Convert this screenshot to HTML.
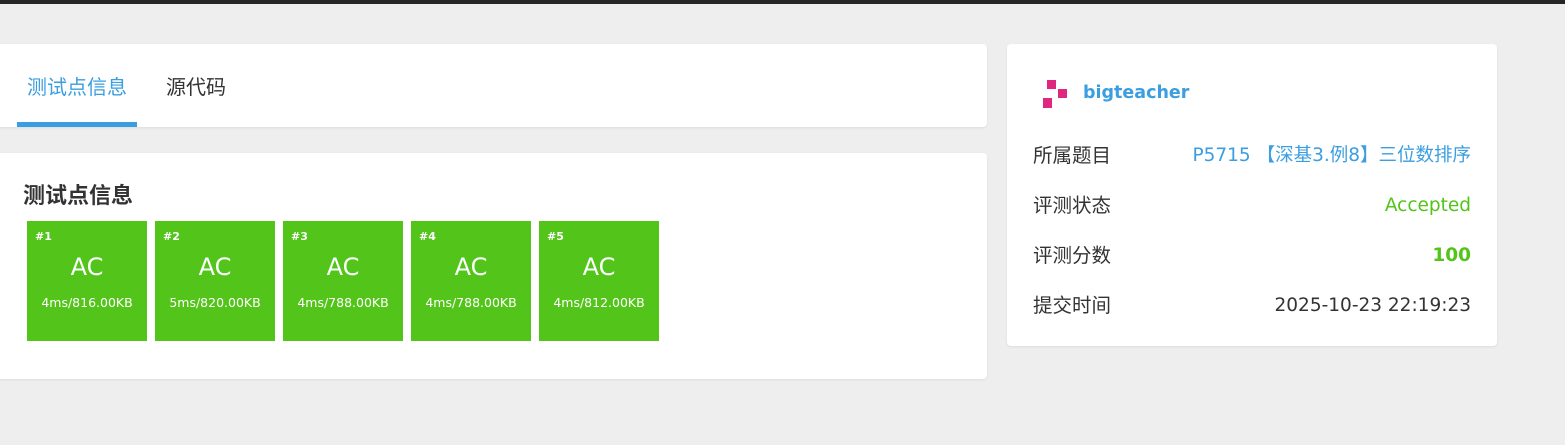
<!DOCTYPE html>
<html><head><meta charset="utf-8"><style>
*{margin:0;padding:0;box-sizing:border-box}
body{width:1565px;height:445px;background:#eeeeee;font-family:"DejaVu Sans","Noto Sans CJK SC",sans-serif;position:relative;overflow:hidden;color:#333}
.top{position:absolute;left:0;top:0;width:1565px;height:4px;background:#262626}
.card{position:absolute;background:#fff;border-radius:4px;box-shadow:0 1px 2px rgba(0,0,0,.08)}
.tab{position:absolute;font-size:20px}
.box{position:absolute;top:221px;width:120px;height:120px;background:#52c41a;color:#fff}
.box .n{position:absolute;left:8px;top:9px;font-size:11px;font-weight:bold}
.box .ac{position:absolute;left:0;right:0;top:32px;text-align:center;font-size:24px}
.box .m{position:absolute;left:0;right:0;top:74px;text-align:center;font-size:12.5px}
.row{position:absolute;left:1033px;width:438px;font-size:19.5px;line-height:26px}
.row span{position:absolute;right:0;top:0;font-size:18.5px}
</style></head><body>
<div class="top"></div>
<div class="card" style="left:-5px;top:44px;width:992px;height:83px">
  <div class="tab" style="left:32px;top:27px;color:#3a9ee0">测试点信息</div>
  <div class="tab" style="left:171px;top:27px;color:#333">源代码</div>
  <div style="position:absolute;left:22px;top:78px;width:120px;height:5px;background:#3a9ee0"></div>
</div>
<div class="card" style="left:-5px;top:153px;width:992px;height:226px">
  <div style="position:absolute;left:28px;top:25px;font-size:22px;font-weight:bold;color:#333">测试点信息</div>
</div>
<div class="box" style="left:27px"><div class="n">#1</div><div class="ac">AC</div><div class="m">4ms/816.00KB</div></div>
<div class="box" style="left:155px"><div class="n">#2</div><div class="ac">AC</div><div class="m">5ms/820.00KB</div></div>
<div class="box" style="left:283px"><div class="n">#3</div><div class="ac">AC</div><div class="m">4ms/788.00KB</div></div>
<div class="box" style="left:411px"><div class="n">#4</div><div class="ac">AC</div><div class="m">4ms/788.00KB</div></div>
<div class="box" style="left:539px"><div class="n">#5</div><div class="ac">AC</div><div class="m">4ms/812.00KB</div></div>
<div class="card" style="left:1007px;top:44px;width:490px;height:302px"></div>
<div style="position:absolute;left:1047px;top:80px;width:9px;height:9px;background:#e0267f"></div>
<div style="position:absolute;left:1058px;top:89px;width:9px;height:9px;background:#e0267f"></div>
<div style="position:absolute;left:1043px;top:98px;width:9px;height:10px;background:#e0267f"></div>
<div style="position:absolute;left:1083px;top:83px;font-size:17.5px;font-weight:bold;color:#3a9ee0">bigteacher</div>
<div class="row" style="top:143px">所属题目<span style="color:#3a9ee0">P5715 【深基3.例8】三位数排序</span></div>
<div class="row" style="top:193px">评测状态<span style="color:#52c41a">Accepted</span></div>
<div class="row" style="top:243px">评测分数<span style="color:#52c41a;font-weight:bold">100</span></div>
<div class="row" style="top:293px">提交时间<span>2025-10-23 22:19:23</span></div>
</body></html>
